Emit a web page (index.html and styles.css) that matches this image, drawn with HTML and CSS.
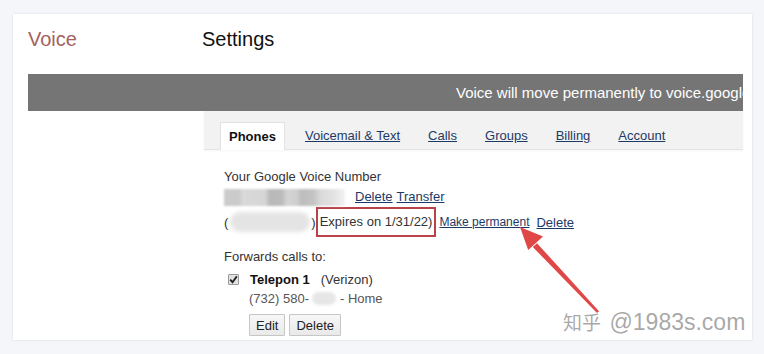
FILE: index.html
```html
<!DOCTYPE html>
<html lang="en">
<head>
<meta charset="utf-8">
<title>Voice Settings</title>
<link rel="stylesheet" href="styles.css">
</head>
<body>
<div class="page">
  <div class="card">
    <header class="top">
      <div class="brand">Voice</div>
      <h1 class="title">Settings</h1>
    </header>
    <div class="banner"><span>Voice will move permanently to voice.google.com</span></div>
    <div class="main">
      <nav class="tabs">
        <span class="tab active">Phones</span>
        <a class="tab-link first" href="#">Voicemail &amp; Text</a>
        <a class="tab-link" href="#">Calls</a>
        <a class="tab-link" href="#">Groups</a>
        <a class="tab-link" href="#">Billing</a>
        <a class="tab-link" href="#">Account</a>
      </nav>
      <section class="panel">
        <div class="line">Your Google Voice Number</div>
        <div class="line row">
          <span class="blur-num"></span>
          <a class="link" href="#">Delete</a>
          <a class="link tight" href="#">Transfer</a>
        </div>
        <div class="row row-exp">
          <span>(</span><span class="blur-oval"></span><span>)</span>
          <span class="hl">Expires on 1/31/22)</span>
          <a class="link small" href="#">Make permanent</a>
          <a class="link" href="#">Delete</a>
        </div>
        <div class="line fwd">Forwards calls to:</div>
        <div class="phone">
          <div class="row phone-head">
            <span class="check"><svg width="9" height="9" viewBox="0 0 9 9"><path d="M1.2 4.6 L3.5 7.2 L7.8 1.4" fill="none" stroke="#222" stroke-width="1.8"/></svg></span>
            <b class="pname">Telepon 1</b>
            <span class="carrier">(Verizon)</span>
          </div>
          <div class="row pnum">(732) 580-<span class="blur-small"></span>- Home</div>
          <div class="btns">
            <button class="btn">Edit</button>
            <button class="btn">Delete</button>
          </div>
        </div>
      </section>
    </div>
  </div>
  <svg class="arrow" width="764" height="354" viewBox="0 0 764 354">
    <polygon points="597.0,313.0 599.0,311.2 537.0,243.2 532.8,247.0" fill="#e04848"/>
    <polygon points="520,227 543.0,236.4 528.2,250.0" fill="#e04848"/>
  </svg>
  <div class="mark"><span class="mark-cjk">知乎</span> <span class="mark-lat">@1983s.com</span></div>
</div>
</body>
</html>
```
FILE: styles.css
```css
* { box-sizing: border-box; }
html, body { margin: 0; padding: 0; }
body {
  background: #f5f6fa;
  font-family: "Liberation Sans", Arial, sans-serif;
  color: #333;
}
.page {
  position: relative;
  width: 764px;
  height: 354px;
  padding: 14px 12px 14px 13px;
  overflow: hidden;
}
.card {
  width: 739px;
  height: 326px;
  background: #fff;
  padding: 13px 9px 0 15px;
  box-shadow: 0 0 2px rgba(200, 205, 220, 0.7);
  overflow: hidden;
}
.top {
  display: flex;
  height: 24px;
  line-height: 24px;
}
.brand {
  width: 174px;
  font-size: 20px;
  color: #a5625e;
}
.title {
  margin: 0;
  font-size: 20px;
  font-weight: normal;
  color: #111;
}
.banner {
  margin-top: 23px;
  height: 37px;
  line-height: 37px;
  background: #757575;
  color: #fff;
  font-size: 15px;
  padding-left: 428px;
  white-space: nowrap;
  overflow: hidden;
}
.main {
  margin-left: 176px;
}
.tabs {
  display: flex;
  align-items: flex-end;
  height: 39px;
  background: #f2f2f2;
  border-bottom: 1px solid #e4e4e4;
  box-shadow: 0 1px 2px rgba(0, 0, 0, 0.04);
  font-size: 13px;
}
.tab {
  margin-left: 16px;
  margin-bottom: -1px;
  height: 28px;
  line-height: 27px;
  padding: 0 8px 0 8px;
  background: #fff;
  border: 1px solid #e2e2e2;
  border-bottom: none;
  font-weight: bold;
  color: #111;
}
.tab-link {
  margin-left: 28px;
  line-height: 27px;
  color: #1d3a66;
}
.tab-link.first { margin-left: 20px; }
.panel {
  padding: 17px 0 0 20px;
  font-size: 13px;
}
.line {
  line-height: 20px;
}
.row {
  display: flex;
  align-items: center;
}
.link {
  color: #1d3a66;
  text-decoration: underline;
}
.link.tight { margin-left: 4px; }
.link.small { font-size: 12px; margin-left: 3px; margin-right: 7px; }
.blur-num {
  width: 121px;
  height: 17px;
  margin-right: 10px;
  background: linear-gradient(90deg, #cbcbcb 0%, #cbcbcb 12%, #d9d9d9 16%, #d6d6d6 34%, #b8b8b8 38%, #bcbcbc 48%, #d4d4d4 52%, #cfcfcf 60%, #bdbdbd 64%, #c4c4c4 74%, #dadada 80%, #e2e2e2 90%, #f3f3f3 100%);
  filter: blur(1.2px);
}
.row-exp {
  height: 30px;
}
.blur-oval {
  width: 80px;
  height: 20px;
  margin: 0 1px 0 2px;
  border-radius: 10px;
  background: #e4e4e4;
  filter: blur(2px);
}
.hl {
  height: 30px;
  line-height: 26px;
  padding: 0 2px 0 2px;
  border: 2px solid #b9424b;
}
.fwd {
  margin-top: 10px;
}
.phone {
  margin-top: 2px;
}
.phone-head {
  height: 20px;
  padding-left: 4px;
}
.check {
  display: flex;
  align-items: center;
  justify-content: center;
  width: 11px;
  height: 11px;
  border: 1px solid #9a9a9a;
  background: #e2e2e2;
  border-radius: 1px;
  margin-right: 11px;
}
.pname {
  color: #111;
  margin-right: 11px;
}
.carrier { color: #333; }
.pnum {
  height: 18px;
  padding-left: 25px;
  color: #555;
}
.blur-small {
  width: 24px;
  height: 13px;
  margin: 0 4px 0 3px;
  border-radius: 7px;
  background: #e6e6e6;
  filter: blur(1.5px);
}
.btns {
  display: flex;
  gap: 4px;
  margin-top: 7px;
  padding-left: 25px;
}
.btn {
  height: 22px;
  padding: 0 6px;
  font-family: "Liberation Sans", Arial, sans-serif;
  font-size: 13px;
  color: #222;
  background: linear-gradient(#f7f7f7, #e9e9e9);
  border: 1px solid #c6c6c6;
  border-radius: 1px;
}
.arrow {
  position: absolute;
  left: 0;
  top: 0;
}
.mark {
  position: absolute;
  left: 563px;
  top: 310px;
  line-height: 24px;
  white-space: nowrap;
  color: rgba(140, 140, 140, 0.75);
}
.mark-cjk {
  font-family: "Noto Sans CJK SC", sans-serif;
  font-size: 19px;
}
.mark-lat {
  font-family: "Liberation Sans", Arial, sans-serif;
  font-size: 23px;
  margin-left: 4px;
}
```
